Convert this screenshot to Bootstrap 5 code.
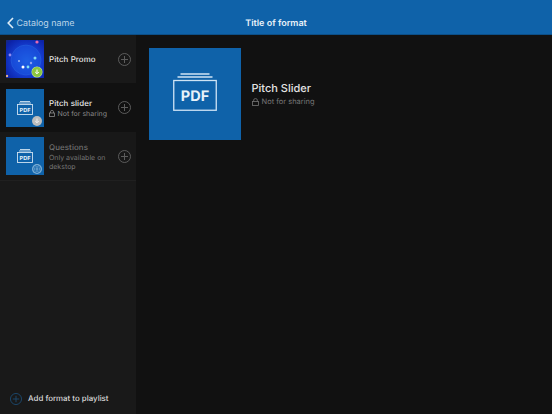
<!DOCTYPE html>
<html lang="en">
<head>
  <meta charset="UTF-8">
  <title>Title of format</title>
  <link href="https://cdn.jsdelivr.net/npm/bootstrap@5.3.2/dist/css/bootstrap.min.css" rel="stylesheet">
  <style>
    html, body { height: 100%; }
    body { background: #111; font-family: Inter, "Open Sans", sans-serif; overflow: hidden; text-rendering: geometricPrecision; }
    .app-shell { height: 414px; }
    .top-bar { height: 35px; background: #0f62a9; color: #e8f1f8; flex: none; border-bottom: 1px solid #0c4f88; padding-top: 11px; }
    .back-link { left: 7px; top: 11px; color: #bcd5e8; font-size: 8.9px; line-height: 24px; gap: 2.5px; }
    .back-link span, .top-title { position: relative; top: .5px; }
    .top-title { font-size: 9px; font-weight: 600; line-height: 24px; }
    .side-col { width: 136px; flex: none; background: #191919; }
    .format-row { height: 48px; padding: 0 5px 0 5.5px; gap: 5.5px; }
    .format-row.is-active { height: 49px; background: #111; }
    .format-row.is-off { height: 49px; border-bottom: 1px solid #202020; background: #181818; }
    .thumb-box { width: 38px; height: 38px; background: #0f62a9; flex: none; }
    .thumb-promo { background: radial-gradient(circle at 55% 55%, #1f62e8 0, #1540d4 45%, #0c22a8 85%, #1a2a70 100%); }
    .thumb-badge { width: 10px; height: 10px; right: 2px; bottom: 1px; border-radius: 50%; background: #bdbdbd; }
    .badge-green { background: #8cc63f; box-shadow: 0 0 0 .5px #c8e89a; }
    .badge-blue { background: #7fb0d6; }
    .row-text { min-width: 0; flex: 1; padding-top: 1px; }
    .row-name { font-size: 7.9px; font-weight: 500; color: #e6e6e6; line-height: 11px; letter-spacing: .1px; }
    .row-note { font-size: 7px; color: #8a8a8a; line-height: 10px; white-space: nowrap; gap: 2.5px; }
    .is-off .row-name { color: #6f6f6f; }
    .is-off .row-note { color: #757575; line-height: 9px; }
    .plus-ico { width: 13px; height: 13px; flex: none; color: #5c5c5c; }
    .side-foot { padding: 0 0 9px 10px; gap: 6px; color: #d8d8d8; font-size: 7.9px; font-weight: 500; line-height: 13px; }
    .side-foot svg { width: 12px; height: 12px; color: #1c4a70; }
    .main-pane { padding: 13px; background: #111; }
    .hero-wrap { gap: 10.5px; }
    .hero-tile { width: 92px; height: 92px; background: #0f62a9; flex: none; }
    .hero-tile svg { margin-bottom: 4px; }
    .hero-name { font-size: 11px; font-weight: 500; color: #e4e4e4; line-height: 15px; }
    .hero-note { font-size: 7.5px; color: #757575; line-height: 11px; gap: 3px; }
  </style>
</head>
<body>
<div class="app-shell d-flex flex-column">
  <header class="top-bar position-relative text-center">
    <div class="back-link position-absolute d-flex align-items-center">
      <svg width="7" height="12" viewBox="0 0 7 12" fill="none" stroke="#dcebf6" stroke-width="1.6"><path d="M6 1 1.2 6 6 11"/></svg>
      <span>Catalog name</span>
    </div>
    <div class="top-title">Title of format</div>
  </header>

  <div class="d-flex flex-grow-1">
    <aside class="side-col d-flex flex-column">
      <div class="format-row d-flex align-items-center">
        <div class="thumb-box thumb-promo position-relative">
          <svg class="position-absolute top-0 start-0" width="38" height="38" viewBox="0 0 38 38">
            <circle cx="20" cy="20" r="15" fill="#1d5ae0" fill-opacity=".45" stroke="#3f86f0" stroke-opacity=".4" stroke-width=".6"/>
            <circle cx="31" cy="2" r="1.6" fill="#e66bb0"/><circle cx="1" cy="36" r="1.2" fill="#e0b090"/>
            <circle cx="4" cy="15" r="1.4" fill="#8f8cf0"/><circle cx="29" cy="18" r="1.5" fill="#7fd8f5"/>
            <circle cx="13" cy="21" r="1" fill="#9fb8f0"/><circle cx="22" cy="27" r="1.4" fill="#7fe0f0"/>
            <circle cx="17" cy="27" r="1.5" fill="#fff"/><circle cx="25" cy="23" r="1.2" fill="#8fa0f0"/>
          </svg>
          <div class="thumb-badge badge-green position-absolute d-flex align-items-center justify-content-center">
            <svg width="6" height="6" viewBox="0 0 6 6" fill="none" stroke="#fff" stroke-width="1"><path d="M3 .5v4M1.2 3 3 4.8 4.8 3"/></svg>
          </div>
        </div>
        <div class="row-text"><div class="row-name">Pitch Promo</div></div>
        <svg class="plus-ico" viewBox="0 0 13 13" fill="none" stroke="currentColor"><circle cx="6.5" cy="6.5" r="6"/><path d="M6.5 3v7M3 6.5h7"/></svg>
      </div>

      <div class="format-row is-active d-flex align-items-center">
        <div class="thumb-box position-relative d-flex align-items-center justify-content-center">
          <svg width="16" height="14" viewBox="0 0 16 14" fill="none" stroke="#cfe2f1" stroke-width=".9"><path d="M3 .5h10M2 2h12"/><rect x=".5" y="3.5" width="15" height="10"/><text x="8" y="11" text-anchor="middle" font-family="Inter" font-size="5.5" font-weight="700" fill="#e8f2fa" stroke="none">PDF</text></svg>
          <div class="thumb-badge position-absolute d-flex align-items-center justify-content-center">
            <svg width="6" height="6" viewBox="0 0 6 6" fill="none" stroke="#eee" stroke-width="1"><path d="M3 .5v4M1.2 3 3 4.8 4.8 3"/></svg>
          </div>
        </div>
        <div class="row-text">
          <div class="row-name">Pitch slider</div>
          <div class="row-note d-flex align-items-center">
            <svg width="6" height="7" viewBox="0 0 6 7" fill="none" stroke="currentColor" stroke-width=".8"><rect x=".5" y="3" width="5" height="3.5"/><path d="M1.5 3V1.5a1.5 1 0 0 1 3 0V3"/></svg>
            <span>Not for sharing</span>
          </div>
        </div>
        <svg class="plus-ico" viewBox="0 0 13 13" fill="none" stroke="currentColor"><circle cx="6.5" cy="6.5" r="6"/><path d="M6.5 3v7M3 6.5h7"/></svg>
      </div>

      <div class="format-row is-off d-flex align-items-center">
        <div class="thumb-box position-relative d-flex align-items-center justify-content-center">
          <svg width="16" height="14" viewBox="0 0 16 14" fill="none" stroke="#cfe2f1" stroke-width=".9"><path d="M3 .5h10M2 2h12"/><rect x=".5" y="3.5" width="15" height="10"/><text x="8" y="11" text-anchor="middle" font-family="Inter" font-size="5.5" font-weight="700" fill="#e8f2fa" stroke="none">PDF</text></svg>
          <div class="thumb-badge badge-blue position-absolute d-flex align-items-center justify-content-center">
            <svg width="8" height="8" viewBox="0 0 8 8" fill="none" stroke="#0f62a9" stroke-width=".6"><circle cx="4" cy="4" r="3.5"/><ellipse cx="4" cy="4" rx="1.6" ry="3.5"/><path d="M.5 4h7M1 2.3h6M1 5.7h6"/></svg>
          </div>
        </div>
        <div class="row-text">
          <div class="row-name">Questions</div>
          <div class="row-note">Only available on<br>dekstop</div>
        </div>
        <svg class="plus-ico" viewBox="0 0 13 13" fill="none" stroke="currentColor"><circle cx="6.5" cy="6.5" r="6"/><path d="M6.5 3v7M3 6.5h7"/></svg>
      </div>

      <div class="side-foot mt-auto d-flex align-items-center">
        <svg viewBox="0 0 13 13" fill="none" stroke="currentColor"><circle cx="6.5" cy="6.5" r="6"/><path d="M6.5 3v7M3 6.5h7"/></svg>
        <span>Add format to playlist</span>
      </div>
    </aside>

    <main class="main-pane flex-grow-1">
      <div class="hero-wrap d-flex align-items-center">
        <div class="hero-tile d-flex align-items-center justify-content-center">
          <svg width="44" height="38" viewBox="0 0 44 38" fill="none" stroke="#cfe4f5" stroke-width="1.3"><path d="M7.5 1h29M4.5 4h35"/><rect x=".75" y="7.5" width="42.5" height="29.75"/><text x="22" y="28" text-anchor="middle" font-family="Inter" font-size="14.5" font-weight="700" fill="#e8f2fa" stroke="none">PDF</text></svg>
        </div>
        <div>
          <div class="hero-name">Pitch Slider</div>
          <div class="hero-note d-flex align-items-center">
            <svg width="7" height="8" viewBox="0 0 7 8" fill="none" stroke="currentColor" stroke-width=".8"><rect x=".5" y="3.5" width="6" height="4"/><path d="M1.7 3.5V2a1.8 1.4 0 0 1 3.6 0v1.5"/></svg>
            <span>Not for sharing</span>
          </div>
        </div>
      </div>
    </main>
  </div>
</div>
</body>
</html>
